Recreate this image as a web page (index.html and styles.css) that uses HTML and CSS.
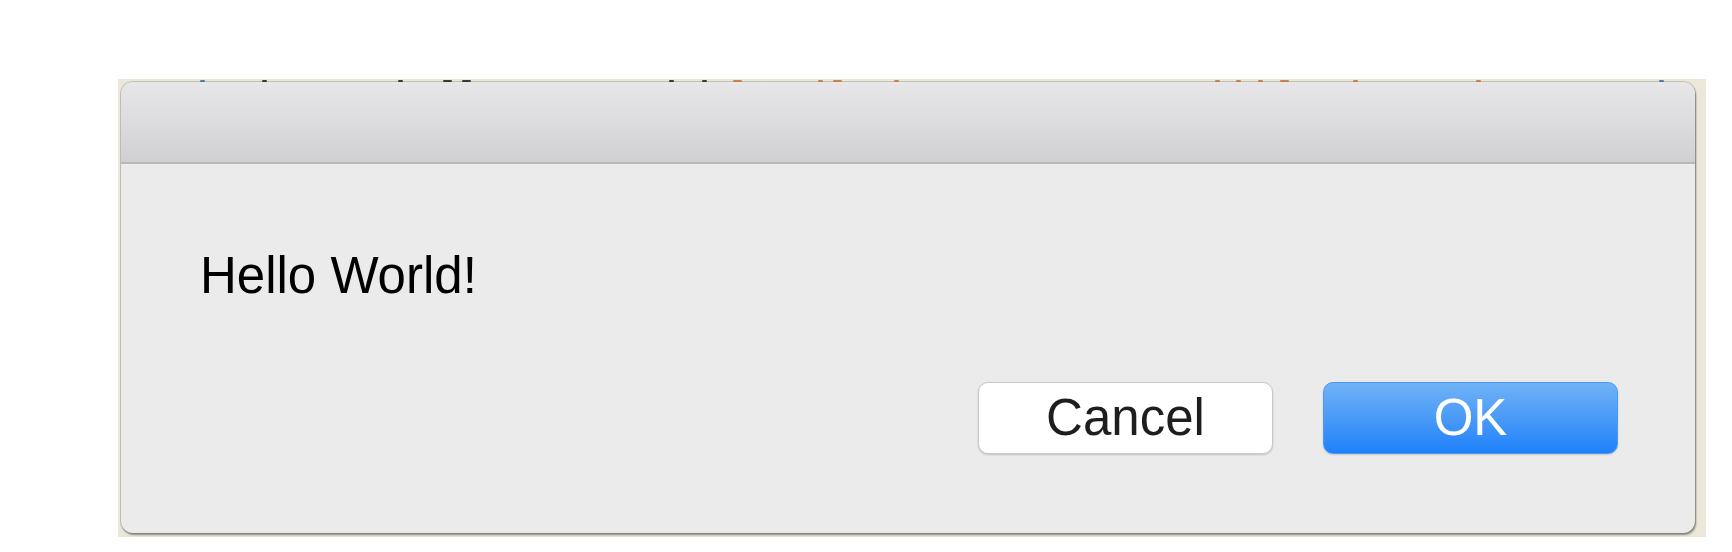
FILE: index.html
```html
<!DOCTYPE html>
<html>
<head>
<meta charset="utf-8">
<title>Alert</title>
<link rel="stylesheet" href="styles.css">
</head>
<body>
  <div class="backdrop">
    <div class="marks">
      <span class="mark blue" style="margin-left:79px"></span>
      <span class="mark black" style="margin-left:57px"></span>
      <span class="mark black" style="margin-left:131px"></span>
      <span class="mark black wide" style="margin-left:40px"></span>
      <span class="mark black wide" style="margin-left:10px"></span>
      <span class="mark black" style="margin-left:198px"></span>
      <span class="mark black" style="margin-left:28px"></span>
      <span class="mark orange wide" style="margin-left:26px"></span>
      <span class="mark orange" style="margin-left:76px"></span>
      <span class="mark orange wide" style="margin-left:10px"></span>
      <span class="mark orange" style="margin-left:52px"></span>
      <span class="mark orange" style="margin-left:316px"></span>
      <span class="mark orange" style="margin-left:16px"></span>
      <span class="mark orange" style="margin-left:17px"></span>
      <span class="mark orange wide" style="margin-left:17px"></span>
      <span class="mark orange" style="margin-left:64px"></span>
      <span class="mark orange" style="margin-left:118px"></span>
      <span class="mark blue" style="margin-left:178px"></span>
    </div>
    <div class="dialog">
      <div class="titlebar"></div>
      <div class="content">
        <p class="message">Hello World!</p>
        <div class="actions">
          <button class="btn btn-cancel">Cancel</button>
          <button class="btn btn-ok">OK</button>
        </div>
      </div>
    </div>
  </div>
</body>
</html>
```

FILE: styles.css
```css
html, body {
  margin: 0;
  padding: 0;
  background: #ffffff;
}

body {
  font-family: "Liberation Sans", Arial, sans-serif;
  width: 1732px;
  height: 552px;
  overflow: hidden;
}

.backdrop {
  margin: 79px 0 0 118px;
  width: 1588px;
  height: 458px;
  box-sizing: border-box;
  padding: 0 11px 4px 3px;
  background: #ebe8da;
  display: flex;
  flex-direction: column;
}

.marks {
  height: 3px;
  display: flex;
  align-items: flex-end;
}

.mark {
  width: 5px;
  height: 2px;
  border-radius: 1px;
  opacity: 0.85;
}

.mark.wide {
  width: 9px;
}

.mark.black {
  background: #1a1c22;
}

.mark.blue {
  background: #3a6a96;
}

.mark.orange {
  background: #c4703a;
}

.dialog {
  height: 451px;
  border-radius: 12px;
  background: #ebebeb;
  display: flex;
  flex-direction: column;
  overflow: hidden;
  box-shadow: 0 0 0 1px rgba(120, 118, 108, 0.35), 1px 2px 2px rgba(60, 58, 50, 0.55);
}

.titlebar {
  height: 80px;
  flex: none;
  background: linear-gradient(to bottom, #e7e6e8 0%, #dbdadc 55%, #d0cfd1 100%);
  border-bottom: 2px solid #b9b8ba;
}

.content {
  flex: 1;
  display: flex;
  flex-direction: column;
  padding: 86px 77px 79px 79px;
}

.message {
  margin: 0;
  font-size: 51px;
  line-height: 51px;
  color: #000000;
}

.actions {
  margin-top: 81px;
  display: flex;
  justify-content: flex-end;
  gap: 50px;
}

.btn {
  width: 295px;
  height: 72px;
  box-sizing: border-box;
  border-radius: 10px;
  font-family: "Liberation Sans", Arial, sans-serif;
  font-size: 51px;
  line-height: 70px;
  padding: 0;
  text-align: center;
}

.btn-cancel {
  background: #ffffff;
  color: #1e1e1e;
  border: 1px solid #c9c9c9;
  box-shadow: 0 1px 2px rgba(0, 0, 0, 0.18);
}

.btn-ok {
  background: linear-gradient(to bottom, #70b3f6 0%, #4a9af7 50%, #1f81fb 100%);
  color: #ffffff;
  border: 1px solid #4f98ef;
  box-shadow: 0 1px 2px rgba(0, 0, 0, 0.15);
}
```
